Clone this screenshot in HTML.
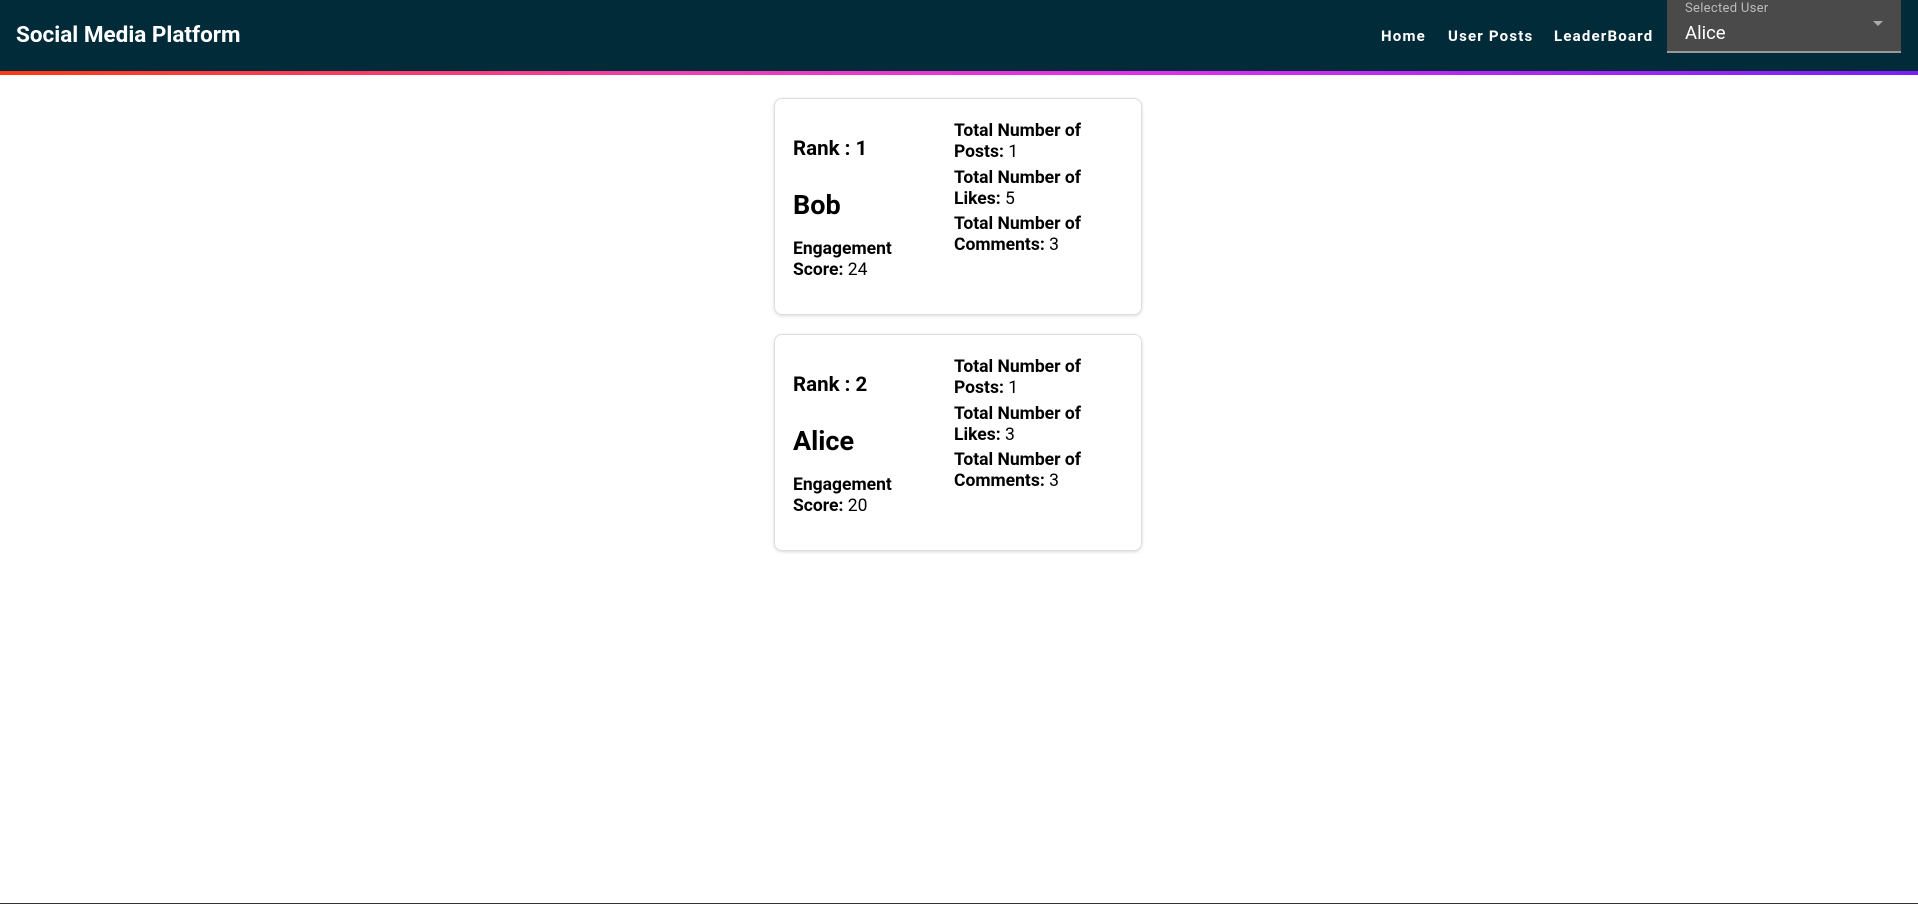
<!DOCTYPE html>
<html><head><meta charset="utf-8"><style>
*{margin:0;padding:0;box-sizing:border-box}
html,body{width:1918px;height:904px;overflow:hidden;background:#fff;font-family:Roboto,"Liberation Sans",sans-serif;color:#000}
.hdr{position:absolute;left:0;top:0;width:1918px;height:71px;background:#022b3a}
.bar{position:absolute;left:0;top:71px;width:1918px;height:4px;background:linear-gradient(90deg,#ff3a10,#f040b0 35%,#e030f0 60%,#7a1ff5)}
.title{position:absolute;left:16px;top:22px;color:#fff;font-weight:bold;font-size:22.5px}
.nav{position:absolute;top:27px;color:#fff;font-weight:bold;font-size:15px;letter-spacing:1.2px}
.sel{position:absolute;left:1667px;top:0;width:234px;height:53px;background:#4a4a4a;border-bottom:2px solid #9a9a9a}
.sel .l{position:absolute;left:18px;top:1px;font-size:13px;color:#bbb;letter-spacing:.3px}
.sel .v{position:absolute;left:18px;top:22px;font-size:18.5px;color:#fff}
.sel .a{position:absolute;left:206px;top:21px;width:0;height:0;border-left:5px solid transparent;border-right:5px solid transparent;border-top:5px solid #aaa}
.card{position:absolute;left:774px;width:368px;height:217px;border:1px solid #ddd;border-radius:8px;box-shadow:0 1px 3px rgba(0,0,0,.15)}
.card div{position:absolute;font-size:17.5px;line-height:21px}
.b{font-weight:bold}
.rank{left:18px;top:40px;font-size:20.5px!important;font-weight:bold}
.name{left:18px;top:91px;font-size:27px!important;line-height:30px!important;font-weight:bold}
.eng{left:18px;top:140px;width:132px}
.r{left:179px;width:155px}
.foot{position:absolute;left:0;top:903px;width:1918px;height:1px;background:#333}
</style></head><body>
<div class="hdr"></div><div class="bar"></div>
<div class="title">Social Media Platform</div>
<div class="nav" style="left:1381px">Home</div>
<div class="nav" style="left:1448px">User Posts</div>
<div class="nav" style="left:1554px">LeaderBoard</div>
<div class="sel"><div class="l">Selected User</div><div class="v">Alice</div><div class="a"></div></div>

<div class="card" style="top:98px">
<div class="rank">Rank : 1</div>
<div class="name">Bob</div>
<div class="eng"><span class="b">Engagement Score:</span> 24</div>
<div class="r" style="top:22px"><span class="b">Total Number of Posts:</span> 1</div>
<div class="r" style="top:69px"><span class="b">Total Number of Likes:</span> 5</div>
<div class="r" style="top:115px"><span class="b">Total Number of Comments:</span> 3</div>
</div>

<div class="card" style="top:334px">
<div class="rank">Rank : 2</div>
<div class="name">Alice</div>
<div class="eng"><span class="b">Engagement Score:</span> 20</div>
<div class="r" style="top:22px"><span class="b">Total Number of Posts:</span> 1</div>
<div class="r" style="top:69px"><span class="b">Total Number of Likes:</span> 3</div>
<div class="r" style="top:115px"><span class="b">Total Number of Comments:</span> 3</div>
</div>
<div class="foot"></div>
</body></html>
